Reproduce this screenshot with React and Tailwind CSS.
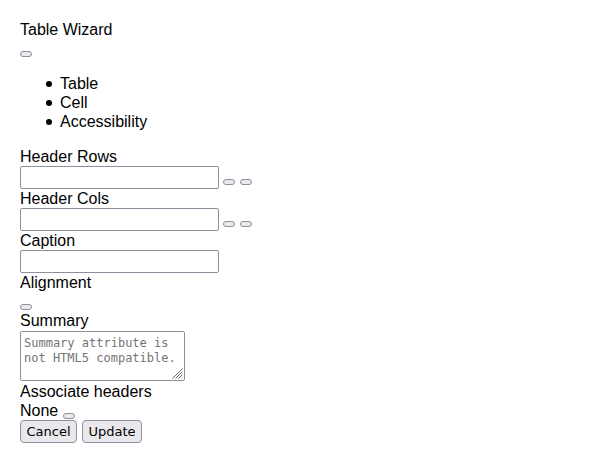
const controlBorder = 'border border-[#8f8f9d]';

function MiniButton({ label }) {
  return (
    <button
      type="button"
      aria-label={label}
      className={`${controlBorder} block h-1.5 w-3 shrink-0 rounded-[3px] bg-[#e9e9ed]`}
    />
  );
}

function TextField({ id, label, children }) {
  return (
    <div>
      <label htmlFor={id} className="block">{label}</label>
      <div className="flex items-end">
        <input
          id={id}
          type="text"
          className={`${controlBorder} block h-[23px] w-[199px] rounded-[2px] bg-white px-1 text-[13px]`}
        />
        {children}
      </div>
    </div>
  );
}

function Stepper({ name }) {
  return (
    <div className="ml-1 flex gap-[5px] pb-1">
      <MiniButton label={`Increase ${name}`} />
      <MiniButton label={`Decrease ${name}`} />
    </div>
  );
}

function BulletItem({ children }) {
  return (
    <li className="flex items-start gap-2 before:mt-[7px] before:size-1.5 before:rounded-full before:bg-black before:content-['']">
      {children}
    </li>
  );
}

function ActionButton({ width, children }) {
  return (
    <button
      type="button"
      className={`${controlBorder} ${width} h-[23px] rounded-[4px] bg-[#e9e9ed] text-center font-['DejaVu_Sans',sans-serif] text-[13px] leading-[16px]`}
    >
      {children}
    </button>
  );
}

export default function App() {
  return (
    <main className="min-h-screen bg-white p-5 font-['Liberation_Sans',Arial,sans-serif] text-[16px] leading-[19px] text-black">
      <h1>Table Wizard</h1>
      <div className="flex h-[19px] items-end pb-px">
        <MiniButton label="Close" />
      </div>

      <ul className="my-4 pl-[26px]">
        <BulletItem>Table</BulletItem>
        <BulletItem>Cell</BulletItem>
        <BulletItem>Accessibility</BulletItem>
      </ul>

      <form onSubmit={(event) => event.preventDefault()}>
        <TextField id="header-rows" label="Header Rows">
          <Stepper name="header rows" />
        </TextField>
        <TextField id="header-cols" label="Header Cols">
          <Stepper name="header cols" />
        </TextField>
        <TextField id="caption" label="Caption" />

        <div>Alignment</div>
        <div className="flex h-[19px] items-end pb-px">
          <MiniButton label="Alignment" />
        </div>

        <label htmlFor="summary" className="block">Summary</label>
        <div className="relative my-px w-fit">
          <textarea
            id="summary"
            placeholder={'Summary attribute is\nnot HTML5 compatible.'}
            className={`${controlBorder} block h-[50px] w-[165px] resize-none overflow-hidden rounded-[2px] bg-white px-[3px] py-1 font-['DejaVu_Sans_Mono',monospace] text-[12px] leading-[15px] placeholder:text-[#757575]`}
          />
          <svg
            aria-hidden="true"
            viewBox="0 0 11 11"
            className="pointer-events-none absolute right-0.5 bottom-0.5 size-[11px]"
            fill="none"
            stroke="#666666"
            strokeWidth="1"
          >
            <path d="M0.5 10.5 10.5 0.5M3.5 10.5 10.5 3.5M6.5 10.5 10.5 6.5" />
          </svg>
        </div>

        <div>Associate headers</div>
        <div className="flex items-end gap-[5px]">
          <span>None</span>
          <div className="pb-px">
            <MiniButton label="Associate headers" />
          </div>
        </div>
        <div className="flex gap-[5px]">
          <ActionButton width="w-[57px]">Cancel</ActionButton>
          <ActionButton width="w-[60px]">Update</ActionButton>
        </div>
      </form>
    </main>
  );
}
